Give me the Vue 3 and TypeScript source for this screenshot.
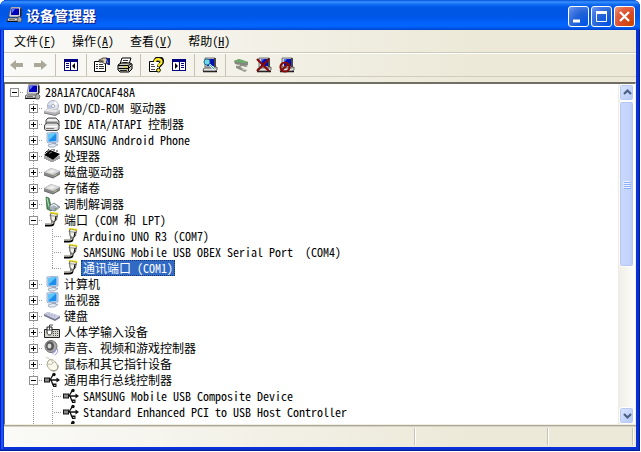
<script setup lang="ts">
import { ref } from 'vue'

interface Menu {
  label: string
  key: string
}

interface Tool {
  icon: string
  title: string
  disabled?: boolean
}

interface TreeNode {
  label: string
  icon: string
  children?: TreeNode[]
  open?: boolean
  last?: boolean
}

interface Row {
  node: TreeNode
  guides: boolean[]
  last: boolean
}

const menus: Menu[] = [
  { label: '文件', key: 'F' },
  { label: '操作', key: 'A' },
  { label: '查看', key: 'V' },
  { label: '帮助', key: 'H' },
]

const toolGroups: Tool[][] = [
  [
    { icon: 'back', title: '后退', disabled: true },
    { icon: 'forward', title: '前进', disabled: true },
  ],
  [{ icon: 'pane-left', title: '显示/隐藏控制台树' }],
  [
    { icon: 'properties', title: '属性' },
    { icon: 'printer', title: '打印' },
  ],
  [
    { icon: 'help', title: '帮助' },
    { icon: 'pane-right', title: '显示/隐藏操作窗格' },
  ],
  [{ icon: 'scan', title: '扫描检测硬件改动' }],
  [
    { icon: 'update', title: '更新驱动程序' },
    { icon: 'uninstall', title: '卸载' },
    { icon: 'disable', title: '停用' },
  ],
]

const root = ref<TreeNode>({
  label: '28A1A7CA0CAF48A',
  icon: 'computer',
  open: true,
  children: [
    { label: 'DVD/CD-ROM 驱动器', icon: 'dvd', children: [] },
    { label: 'IDE ATA/ATAPI 控制器', icon: 'ide', children: [] },
    { label: 'SAMSUNG Android Phone', icon: 'monitor', children: [] },
    { label: '处理器', icon: 'cpu', children: [] },
    { label: '磁盘驱动器', icon: 'disk', children: [] },
    { label: '存储卷', icon: 'disk', children: [] },
    { label: '调制解调器', icon: 'modem', children: [] },
    {
      label: '端口 (COM 和 LPT)',
      icon: 'port',
      open: true,
      children: [
        { label: 'Arduino UNO R3 (COM7)', icon: 'port' },
        { label: 'SAMSUNG Mobile USB OBEX Serial Port  (COM4)', icon: 'port' },
        { label: '通讯端口 (COM1)', icon: 'port' },
      ],
    },
    { label: '计算机', icon: 'monitor', children: [] },
    { label: '监视器', icon: 'monitor', children: [] },
    { label: '键盘', icon: 'keyboard', children: [] },
    { label: '人体学输入设备', icon: 'hid', children: [] },
    { label: '声音、视频和游戏控制器', icon: 'sound', children: [] },
    { label: '鼠标和其它指针设备', icon: 'mouse', children: [] },
    {
      label: '通用串行总线控制器',
      icon: 'usb',
      open: true,
      children: [
        { label: 'SAMSUNG Mobile USB Composite Device', icon: 'usb' },
        { label: 'Standard Enhanced PCI to USB Host Controller', icon: 'usb' },
        { label: '', icon: 'usb' },
      ],
    },
  ],
})

const selected = ref('通讯端口 (COM1)')

function flatten(node: TreeNode, guides: boolean[], last: boolean): Row[] {
  const rows: Row[] = [{ node, guides, last }]
  if (node.open && node.children) {
    const kids = node.children
    kids.forEach((child, i) => {
      const isLast = i === kids.length - 1 && child.icon !== 'usb'
      rows.push(...flatten(child, [...guides, !last], isLast))
    })
  }
  return rows
}

function toggle(node: TreeNode) {
  node.open = !node.open
}
</script>

<template>
  <svg class="sprite" aria-hidden="true">
    <symbol id="computer" viewBox="0 0 16 16">
      <path d="M4 0h9l1 1v8l-1 1H3L2 9z" fill="#d4d4dc" stroke="#555" stroke-width=".6" />
      <path d="M4.500 1.500h7.500v6.500h-8z" fill="#0000b8" />
      <path d="M5 2h3l-3 4z" fill="#5c7cff" />
      <path d="M13 1l1.500 1v7L13 10z" fill="#222" />
      <path d="M1 11h12v3H0z" fill="#e4e4e4" stroke="#333" stroke-width=".8" />
      <path d="M2 12.500h6" stroke="#777" />
      <path d="M0 14.500h13" stroke="#111" />
      <path d="M12 9l3 3-1 3h-3l-1-2z" fill="#a8a8a8" stroke="#444" stroke-width=".7" />
    </symbol>
    <symbol id="dvd" viewBox="0 0 16 16">
      <circle cx="9" cy="6" r="5.500" fill="#dfe4f0" stroke="#9aa0b0" stroke-width=".8" />
      <path d="M9 6l2-5 3 3z" fill="#fff" />
      <path d="M9 6L4.500 9 4 5z" fill="#b4c2e8" />
      <circle cx="9" cy="6" r="1.600" fill="#fff" stroke="#8c8ca0" stroke-width=".7" />
      <path d="M0 11l4-3 12 2v3l-5 2.500L0 13z" fill="#b4b4b8" />
      <path d="M0 11l4-2.500 11.500 2L11 12.500z" fill="#e8e8ea" />
      <path d="M0 13l11 2.500 5-2.500" fill="none" stroke="#666" stroke-width=".8" />
    </symbol>
    <symbol id="ide" viewBox="0 0 16 16">
      <path d="M4 2h8l3 3v5H2V4z" fill="#b8b8b8" stroke="#505050" />
      <path d="M4 3h8l2 2H2.500z" fill="#eee" />
      <path d="M3 7h10l2 2v4l-2 1.500H2L.5 13V9z" fill="#ddd" stroke="#444" />
      <path d="M2 10.500h11" stroke="#fff" />
      <path d="M2 12.500h8" stroke="#777" />
    </symbol>
    <symbol id="monitor" viewBox="0 0 16 16">
      <path d="M3 1l10-1 1 1v9L4 11 3 10z" fill="#d7e6fb" stroke="#7791b8" stroke-width=".7" />
      <path d="M4.500 2l8-.8V9l-8 .8z" fill="#1e8ee8" />
      <path d="M4.500 2l8-.8L5 8z" fill="#5bc7fa" />
      <path d="M9 10h3v3H8z" fill="#a0afc4" />
      <path d="M4 13l5-1.500 5 1-4 2.500H5z" fill="#e6edf6" stroke="#8290a6" stroke-width=".7" />
    </symbol>
    <symbol id="cpu" viewBox="0 0 16 16">
      <path d="M1 8v3M3 9v3M5 10v3M7 11v3M9 11v3M11 10v3M13 9v3M15 8v3" stroke="#444" />
      <path d="M0 7l6-5 10 4-7 6z" fill="#000" />
      <path d="M1 5l2-2M3 4l2-3M8 2V1M10 3V1M13 4V2" stroke="#333" />
      <path d="M5 5.500l3-1.500" stroke="#777" />
      <path d="M1 8l8 4 7-5" fill="none" stroke="#bbb" stroke-width=".5" />
    </symbol>
    <symbol id="disk" viewBox="0 0 16 16">
      <path d="M0 8l7-4 9 3v3l-7 4-9-3z" fill="#8a8a8a" />
      <path d="M0 8l7-4 9 3-7 4z" fill="#d5d5d5" />
      <path d="M3 8l5-2.500 4 1.500-4 2z" fill="#eee" />
      <path d="M0 11l9 3 7-4" fill="none" stroke="#555" stroke-width=".8" />
      <path d="M10.500 11.500l2-1" stroke="#a6e090" />
    </symbol>
    <symbol id="modem" viewBox="0 0 16 16">
      <path d="M2 1l3 1 2 8 2 2-2 3-4-2z" fill="#4f955c" stroke="#295a35" stroke-width=".7" />
      <path d="M3 2l2 9" stroke="#b4deb8" />
      <path d="M5 10l5-3 6 4-5 4-5-1z" fill="#aab4bd" stroke="#6b7680" stroke-width=".7" />
      <path d="M7 10l3-1.500 3 2" fill="none" stroke="#fff" />
      <path d="M10.500 13h2" stroke="#448440" />
    </symbol>
    <symbol id="port" viewBox="0 0 16 16">
      <path d="M6.500 1l7 1-1 6-2.500 2-3-2z" fill="#eeeee2" stroke="#444" stroke-width=".9" />
      <path d="M6 .5l9 1.500" stroke="#f2e500" stroke-width="2" stroke-dasharray="1.500 .7" />
      <path d="M5.500 3.500l8.500 1" stroke="#777" stroke-width=".7" />
      <path d="M12 4l-1 5" stroke="#000" />
      <path d="M9 9v2c0 2-1.500 2-3 2H1" fill="none" stroke="#000" stroke-width="3" />
      <path d="M9 9v1.500c0 1.500-1.500 1.500-3 1.500H1" fill="none" stroke="#c7c7bb" stroke-width="1.300" />
    </symbol>
    <symbol id="keyboard" viewBox="0 0 16 16">
      <path d="M0 6l4-2 12 4v2l-5 3L0 8z" fill="#777991" />
      <path d="M0 6l4-2 12 4-5 3z" fill="#dcddf0" />
      <path d="M2 6l10 3.500M3.500 5.200l10 3.400" stroke="#8b8dac" stroke-width=".8" stroke-dasharray="1 .7" />
    </symbol>
    <symbol id="hid" viewBox="0 0 16 16">
      <path d="M.5 5.500h15v8H.5z" fill="#d5d5cd" stroke="#222" />
      <path d="M9 7.500h5M9 9.500h5M9 11.500h5" stroke="#555" stroke-dasharray="1 1" />
      <path d="M3 3h5v5c0 4-5 4-5 0z" fill="#fff" stroke="#222" />
      <path d="M3 6h5M5.500 3v3M5.500 3V1H9" fill="none" stroke="#222" stroke-width=".8" />
    </symbol>
    <symbol id="sound" viewBox="0 0 16 16">
      <ellipse cx="7" cy="6.500" rx="6" ry="6" fill="#aaa" stroke="#707070" />
      <ellipse cx="6" cy="6" rx="4" ry="4.500" fill="#555" />
      <ellipse cx="5.500" cy="6" rx="2" ry="2.500" fill="#d8d8d8" />
      <path d="M11 9c1 3-1 4-3 5M13.500 9c1 3-1 5-3 6" fill="none" stroke="#9c9cef" />
    </symbol>
    <symbol id="mouse" viewBox="0 0 16 16">
      <path d="M2 1c1 2 3 0 4 3" fill="none" stroke="#c6bda6" />
      <path d="M4 5c3-3 6-1 8 2 3 4 2 7-1 8-4 1-7-3-8-6z" fill="#fbf9ee" stroke="#aaa18c" />
      <path d="M4 8c3 1 5 0 7-3M7 4l2 3" fill="none" stroke="#c2b9a5" />
      <path d="M7 14c4 2 8-1 7-5" fill="none" stroke="#9d9788" />
    </symbol>
    <symbol id="usb" viewBox="0 0 16 16">
      <path d="M4 8h9M6 8l3-5h2M7 8l2 5h2" fill="none" stroke="#111" stroke-width="1.300" />
      <path d="M12.500 5.500L16 8l-3.500 2.500z" fill="#111" />
      <rect x=".5" y="6" width="5" height="4" fill="#888" stroke="#111" />
      <circle cx="10" cy="2.500" r="1.700" fill="#111" />
      <rect x="9" y="11.500" width="3.500" height="3.500" fill="#111" />
      <path d="M10 13.500h1.500" stroke="#aaa" />
    </symbol>
    <symbol id="back" viewBox="0 0 16 16">
      <path d="M1 8l6-5v3h7v4H7v3z" fill="#aca899" />
    </symbol>
    <symbol id="forward" viewBox="0 0 16 16">
      <path d="M15 8L9 3v3H2v4h7v3z" fill="#aca899" />
    </symbol>
    <symbol id="pane-left" viewBox="0 0 16 16">
      <path d="M1 2h14v12H1z" fill="#000080" />
      <path d="M2 5h5v8H2zM8 5h6v8H8z" fill="#fff" />
      <path d="M3 6.500h3M3 8.500h3M3 10.500h3" stroke="#000080" />
      <path d="M12 6v6L9 9z" fill="#000" />
    </symbol>
    <symbol id="pane-right" viewBox="0 0 16 16">
      <path d="M1 2h14v12H1z" fill="#000080" />
      <path d="M2 5h6v8H2zM9 5h5v8H9z" fill="#fff" />
      <path d="M10 6.500h3M10 8.500h3M10 10.500h3" stroke="#000080" />
      <path d="M4 6v6l3-3z" fill="#000" />
    </symbol>
    <symbol id="properties" viewBox="0 0 16 16">
      <path d="M.5 4.500h11v10H.5z" fill="#fff" stroke="#000" />
      <path d="M2 7.500h2M5 7.500h4M2 9.500h2M5 9.500h5M2 11.500h2M5 11.500h5" stroke="#333" />
      <path d="M5 3l4-2h4v5l-2 1-3-2H5z" fill="#e7d2b3" stroke="#222" stroke-width=".8" />
      <path d="M5 4l4-1M6 5l4-1" stroke="#222" stroke-width=".7" />
      <path d="M12 1h4v7h-2l-2-2z" fill="#15207c" />
      <path d="M12 2l2 4" stroke="#8c9edc" />
    </symbol>
    <symbol id="printer" viewBox="0 0 16 16">
      <path d="M5 1h9l-2 6H3z" fill="#fff" stroke="#000" />
      <path d="M6 3.500h5M5.500 5.500h5" stroke="#333" />
      <path d="M1 8l3-2h9l2 1v5l-3 3H3l-2-2z" fill="#c9c7b9" stroke="#000" />
      <path d="M1 8.500h10l3-1.500M1.500 11.500h10l3-3M11.500 9v5" fill="none" stroke="#000" />
      <path d="M7 10h3" stroke="#e7db00" />
      <path d="M3 13.500h7" stroke="#222" />
    </symbol>
    <symbol id="help" viewBox="0 0 16 16">
      <path d="M1.500 4.500h10v10h-10z" fill="#fff" stroke="#000" />
      <path d="M3 7.500h3M3 9.500h4M3 12.500h4" stroke="#444" />
      <path d="M7 5c0-5 8-5 7 0 0 2-3 2-3 5" fill="none" stroke="#111" stroke-width="4" />
      <path d="M7 5c0-4 7-4 6.500 0 0 2-2.800 2-2.800 4.500" fill="none" stroke="#ffee20" stroke-width="2.200" />
      <circle cx="10.500" cy="13.200" r="1.900" fill="#ffee20" stroke="#111" />
    </symbol>
    <symbol id="device" viewBox="0 0 16 16">
      <path d="M3 1h10v9H3z" fill="#d3d7df" stroke="#555" stroke-width=".8" />
      <path d="M5 2h7v7H5z" fill="#0010b8" />
      <path d="M5 2h3L5 6z" fill="#5070f0" />
      <path d="M13 1v9M1 14.500h14" stroke="#111" stroke-width="1.300" />
      <path d="M2 11h11l2-1v3l-2 1H1z" fill="#e2e2df" stroke="#444" stroke-width=".8" />
    </symbol>
    <symbol id="scan" viewBox="0 0 16 16">
      <use href="#device" />
      <path d="M6 6l6 6" stroke="#e4ffff" stroke-width="2" />
      <circle cx="5" cy="5" r="3" fill="#71d8e8" stroke="#246b8f" />
      <path d="M7 7l5 5" stroke="#28a9cd" />
    </symbol>
    <symbol id="update" viewBox="0 0 16 16">
      <path d="M1 4l5-2 9 3v3l-4 1-9-2z" fill="#838981" />
      <path d="M1 4l5-2 9 3-4 1z" fill="#6dae67" />
      <path d="M3 9l5-2 7 2-2 1-4-1-2 1 7 3-2 2-9-4z" fill="#8d8d84" />
      <path d="M4 9l3-1M9 12l4 1" stroke="#e0e0d8" />
    </symbol>
    <symbol id="uninstall" viewBox="0 0 16 16">
      <use href="#device" />
      <path d="M1 2l12 12M13 2L1 14" stroke="#850b0b" stroke-width="2.200" />
    </symbol>
    <symbol id="disable" viewBox="0 0 16 16">
      <use href="#device" />
      <circle cx="6" cy="10" r="4.500" fill="none" stroke="#850b0b" stroke-width="2.200" />
      <path d="M3 13l6-6" stroke="#850b0b" stroke-width="2.200" />
    </symbol>
  </svg>

  <main class="window">
    <header class="titlebar">
      <svg class="icon"><use href="#computer" /></svg>
      <h1>设备管理器</h1>
      <div class="captions">
        <button type="button" class="caption" aria-label="最小化">
          <svg viewBox="0 0 19 19"><path d="M4 14h7" stroke="#fff" stroke-width="3" /></svg>
        </button>
        <button type="button" class="caption" aria-label="最大化">
          <svg viewBox="0 0 19 19">
            <path d="M4.500 5v9.500h10V5" fill="none" stroke="#fff" />
            <path d="M4 5.500h11" stroke="#fff" stroke-width="3" />
          </svg>
        </button>
        <button type="button" class="caption close" aria-label="关闭">
          <svg viewBox="0 0 19 19"><path d="M5 5l9 9M14 5l-9 9" stroke="#fff" stroke-width="2.300" /></svg>
        </button>
      </div>
    </header>

    <div class="body">
      <nav class="menubar">
        <button v-for="m in menus" :key="m.key" type="button" class="menu">{{ m.label }}(<u>{{ m.key }}</u>)</button>
      </nav>

      <div class="toolbar" role="toolbar">
        <div v-for="(group, g) in toolGroups" :key="g" class="group">
          <button
            v-for="t in group"
            :key="t.icon"
            type="button"
            class="tool"
            :disabled="t.disabled"
            :aria-label="t.title"
          >
            <svg class="icon"><use :href="'#' + t.icon" /></svg>
          </button>
        </div>
      </div>

      <section class="pane">
        <div class="tree" role="tree">
          <div
            v-for="(row, i) in flatten(root, [], true)"
            :key="i"
            class="row"
            role="treeitem"
            :aria-level="row.guides.length + 1"
            :aria-selected="!!row.node.label && row.node.label === selected"
          >
            <span v-for="(line, g) in row.guides" v-show="g > 0 || row.guides.length > 0" :key="g" class="cell" :class="{ through: line }"></span>
            <span class="cell branch" :class="{ top: row.guides.length === 0, last: row.last }">
              <button
                v-if="row.node.children"
                type="button"
                class="expander"
                :class="{ open: row.node.open }"
                :aria-label="row.node.open ? '折叠' : '展开'"
                @click="toggle(row.node)"
              ></button>
            </span>
            <svg class="icon"><use :href="'#' + row.node.icon" /></svg>
            <span
              class="label"
              :class="{ selected: row.node.label === selected }"
              @click="selected = row.node.label"
            >{{ row.node.label }}</span>
          </div>
        </div>

        <div class="scrollbar">
          <button type="button" class="scroll-button" aria-label="向上滚动">
            <svg viewBox="0 0 15 15"><path d="M4 9l3.500-3.500L11 9" /></svg>
          </button>
          <div class="track">
            <div class="thumb"><i></i><i></i><i></i><i></i></div>
            <div class="rest"></div>
          </div>
          <button type="button" class="scroll-button" aria-label="向下滚动">
            <svg viewBox="0 0 15 15"><path d="M4 6l3.500 3.500L11 6" /></svg>
          </button>
        </div>
      </section>

      <footer class="statusbar">
        <span></span>
        <span></span>
        <span></span>
      </footer>
    </div>
  </main>
</template>

<style>
body {
  background: #fff;
}

#app {
  height: 100vh;
  padding: 0 1px 1px 0;
  box-sizing: border-box;
}
</style>

<style scoped>
.sprite {
  position: absolute;
  width: 0;
  height: 0;
}

.window {
  display: flex;
  flex-direction: column;
  height: 100%;
  box-sizing: border-box;
  padding: 0 4px 4px;
  overflow: hidden;
  border-radius: 7px 7px 0 0;
  background: #0831d9;
  box-shadow: inset -1px -1px #001ea0, inset -2px -2px #0831c4, inset 1px 0 #0019cf, inset 3px 0 #1659ef;
  font-family: "Noto Sans CJK SC", sans-serif;
  font-size: 12px;
  font-feature-settings: "hwid";
  color: #000;
}

button {
  padding: 0;
  margin: 0;
  border: 0;
  background: none;
  font: inherit;
  font-feature-settings: inherit;
  color: inherit;
}

.icon {
  display: block;
  flex: none;
  width: 16px;
  height: 16px;
}

.titlebar {
  display: flex;
  align-items: center;
  flex: none;
  height: 30px;
  margin: 0 -4px;
  padding: 0 5px 0 7px;
  box-sizing: border-box;
  background: linear-gradient(#0050d8 0, #3a92ff 2px, #1671f4 4px, #0058e6 7px, #0055e5 16px, #0262fb 23px, #0266ff 26px, #0050df 29px, #003fc4 30px);
}

.titlebar h1 {
  flex: 1;
  margin: 0 0 0 3px;
  font-size: 14px;
  line-height: 20px;
  font-weight: 700;
  color: #fff;
  text-shadow: 1px 1px #0a1883;
}

.captions {
  display: flex;
  gap: 2px;
  padding-top: 3px;
}

.caption {
  display: grid;
  width: 21px;
  height: 21px;
  border: 1px solid #fff;
  border-radius: 3px;
  background: radial-gradient(circle at 90% 90%, #0054e9 0%, #2263d5 50%, #4479e4 75%, #729af0 100%);
}

.caption svg {
  width: 19px;
  height: 19px;
}

.caption.close {
  background: radial-gradient(circle at 90% 90%, #cc4600 0%, #dc4b2a 50%, #e26848 75%, #f0a088 100%);
}

.body {
  display: flex;
  flex: 1;
  flex-direction: column;
  min-height: 0;
  background: linear-gradient(90deg, #fafaf8, #ece9d8 75%);
}

.menubar {
  display: flex;
  flex: none;
  height: 22px;
  padding-left: 2px;
  border-bottom: 1px solid #cdcabb;
}

.menu {
  padding: 0 8px;
  line-height: 22px;
}

.toolbar {
  display: flex;
  align-items: center;
  flex: none;
  height: 22px;
  padding-left: 1px;
  border-top: 1px solid #fff;
  border-bottom: 1px solid #d0cdbf;
}

.group {
  display: flex;
}

.group + .group {
  margin-left: 4px;
  padding-left: 3px;
  border-left: 1px solid #c5c2b2;
}

.tool {
  display: grid;
  place-items: center;
  width: 23px;
  height: 22px;
}

.pane {
  display: flex;
  flex: 1;
  min-height: 0;
  margin-top: 5px;
  border-top: 2px solid #716f64;
  border-left: 1px solid #716f64;
  border-right: 1px solid #f1efe2;
  border-bottom: 1px solid #f1efe2;
  background: #fff;
}

.tree {
  flex: 1;
  min-width: 0;
  overflow: hidden;
}

.row {
  display: flex;
  height: 16px;
}

.cell {
  display: flex;
  flex: none;
  justify-content: center;
  align-items: center;
  width: 19px;
  height: 16px;
  background-repeat: no-repeat;
}

.through {
  background-image: repeating-linear-gradient(#fff 0 1px, #999 1px 2px);
  background-size: 1px 16px;
  background-position: 9px 0;
}

.branch {
  margin-right: 1px;
  background-image: repeating-linear-gradient(#fff 0 1px, #999 1px 2px), repeating-linear-gradient(90deg, #999 0 1px, #fff 1px 2px);
  background-size: 1px 16px, 10px 1px;
  background-position: 9px 0, 9px 8px;
}

.branch.last {
  background-size: 1px 8px, 10px 1px;
}

.branch.top {
  background-size: 0 0, 10px 1px;
}

.expander {
  width: 9px;
  height: 9px;
  border: 1px solid #919191;
  background:
    linear-gradient(#000, #000) center / 5px 1px no-repeat,
    linear-gradient(#000, #000) center / 1px 5px no-repeat,
    #fff;
}

.expander.open {
  background: linear-gradient(#000, #000) center / 5px 1px no-repeat, #fff;
}

.label {
  margin-left: 2px;
  padding: 0 2px;
  line-height: 16px;
  white-space: pre;
}

.label.selected {
  background: #316ac5;
  color: #fff;
  outline: 1px dotted #17376c;
  outline-offset: -1px;
}

.scrollbar {
  display: flex;
  flex: none;
  flex-direction: column;
  width: 17px;
  padding: 0 1px;
  box-sizing: border-box;
  background: linear-gradient(90deg, #eeede5, #fefefb);
}

.scroll-button {
  display: grid;
  place-items: center;
  flex: none;
  height: 17px;
  border: 1px solid #fff;
  border-radius: 3px;
  background: linear-gradient(135deg, #d9e5ff, #b5c9f7);
  box-shadow: inset 0 0 0 1px #b9c9f2;
}

.scroll-button svg {
  width: 15px;
  height: 15px;
}

.scroll-button path {
  fill: none;
  stroke: #4d6185;
  stroke-width: 2.200;
}

.track {
  display: flex;
  flex: 1;
  flex-direction: column;
  min-height: 0;
}

.thumb {
  display: flex;
  flex: 54;
  flex-direction: column;
  justify-content: center;
  align-items: center;
  gap: 1px;
  border: 1px solid #fff;
  border-radius: 3px;
  background: linear-gradient(90deg, #cad8fd, #c3d3fd 70%, #b7c9f6);
  box-shadow: inset 0 0 0 1px #b5c6ef;
}

.thumb i {
  width: 7px;
  height: 1px;
  background: #eef4fe;
  box-shadow: 1px 1px #8cb0f8;
}

.rest {
  flex: 46;
}

.statusbar {
  display: grid;
  grid-template-columns: 1fr 133px 85px;
  flex: none;
  height: 22px;
  padding: 2px 3px 2px 0;
  box-sizing: border-box;
  border-top: 1px solid #aca899;
  box-shadow: inset 0 1px #d6d3c4;
}

.statusbar span {
  border-right: 1px solid #c6c3b3;
  box-shadow: 1px 0 #fff;
}
</style>
